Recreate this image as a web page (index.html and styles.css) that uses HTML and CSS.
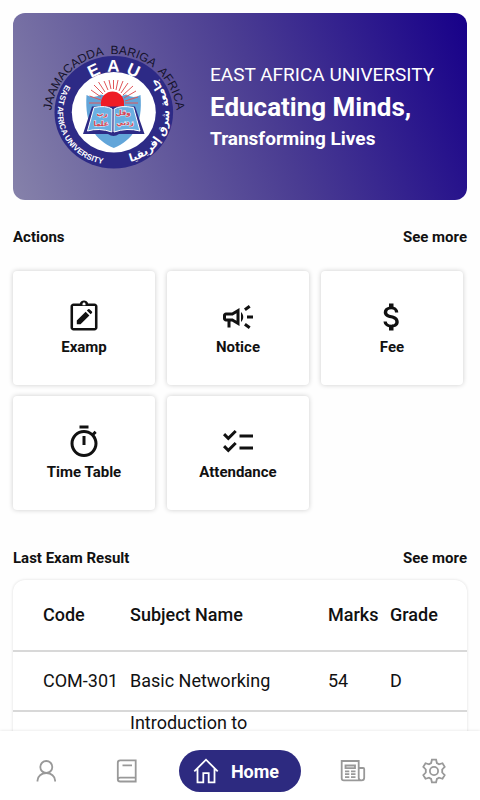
FILE: index.html
```html
<!DOCTYPE html>
<html lang="en">
<head>
<meta charset="utf-8">
<meta name="viewport" content="width=device-width, initial-scale=1">
<title>East Africa University</title>
<link rel="stylesheet" href="styles.css">
</head>
<body>
<main class="content">
  <section class="banner">
    <svg class="logo" viewBox="40 40 148 132" role="img" aria-label="EAU logo">
      <defs>
        <path id="arc-outer" d="M51 117 A63 64 0 0 1 177 117"/>
        <path id="arc-eau" d="M72.500 112 A41.300 41.300 0 0 1 155.100 112"/>
        <path id="arc-left" d="M66 83.500 A55 52.500 0 0 0 114 163.800"/>
        <path id="arc-right" d="M118 162.500 A52 51 0 0 0 150 72"/>
      </defs>
      <ellipse cx="113.800" cy="111.300" rx="59.300" ry="56.300" fill="#2d2a86"/>
      <ellipse cx="113.800" cy="111.300" rx="42" ry="40.300" fill="#fff"/>
      <path d="M86.500 94 Q94 98 101 93.500 Q114 99 126 93.500 Q133 98 140.500 94 C143 124 133 139 113.800 147 C95 139 84.500 124 86.500 94Z" fill="#62a5d9"/>
      <path d="M101 102L89 102M101 99L89.500 95M101 96L91 89M103 93L94 84M105 91L98.500 81M108 89L104 80M111 88L109 79M113.500 88V79M116 89L118 79M119 90L123 80M121 92L128 82M123 94L133 85M124 97L136 90M125 100L138 96M125 102L138 102" stroke="#e0565a"/>
      <path d="M101 107 V102 A11.500 11.500 0 0 1 124 102 V107Z" fill="#ee1c25"/>
      <path d="M92 105.500 L83 133 H108 Q113.500 137 119 133 H144.500 L135 105.500Z" fill="#2d2a86"/>
      <path d="M94 106.500 Q106 104 112 108 L111.800 131 Q99 126.500 87.500 130Z" fill="#6bb0e2" stroke="#fff"/>
      <path d="M114.200 108 Q120 104 133.500 106.500 L140 130 Q127 126.500 114 131Z" fill="#6bb0e2" stroke="#fff"/>
      <g class="book-text" direction="rtl">
        <text x="102" y="115">رب</text>
        <text x="101" y="125">علما</text>
        <text x="123" y="114">وقل</text>
        <text x="125" y="124">زدني</text>
      </g>
      <text class="arc-title"><textPath href="#arc-outer" startOffset="50%">JAAMACADDA<tspan dx="4"> BARIGA</tspan><tspan dx="4"> AFRICA</tspan></textPath></text>
      <text class="arc-eau"><textPath href="#arc-eau" startOffset="50%">E<tspan dx="6">A</tspan><tspan dx="6">U</tspan></textPath></text>
      <text class="arc-name"><textPath href="#arc-left">EAST AFRICA UNIVERSITY</textPath></text>
      <text class="arc-arabic"><textPath href="#arc-right" startOffset="52%">جامعة شرق إفريقيا</textPath></text>
    </svg>
    <div class="banner-text">
      <p class="banner-name">EAST AFRICA UNIVERSITY</p>
      <h1 class="banner-lead">Educating Minds,</h1>
      <p class="banner-sub">Transforming Lives</p>
    </div>
  </section>

  <section class="section">
    <header class="section-head">
      <h2>Actions</h2>
      <a href="#actions">See more</a>
    </header>
    <div class="cards" id="actions">
      <button class="card" type="button">
        <svg viewBox="0 0 24 24" aria-hidden="true"><path fill-rule="evenodd" d="M19 3h-4.180C14.400 1.840 13.300 1 12 1s-2.400.840-2.820 2H5c-1.100 0-2 .900-2 2v14c0 1.100.900 2 2 2h14c1.100 0 2-.900 2-2V5c0-1.100-.900-2-2-2zm-7-.600c.600 0 1 .400 1 1v.800h-2v-.800c0-.600.400-1 1-1zM19.300 19.300H4.700V4.700h14.600z"/><path d="M7.200 16.900v-2.500l5.900-5.900 2.500 2.500-5.900 5.900zM13.900 7.700l.900-.900q.500-.400.900 0l1.600 1.600q.400.400 0 .900l-.900.900z"/></svg>
        <span>Examp</span>
      </button>
      <button class="card" type="button">
        <svg viewBox="0 0 24 24" aria-hidden="true"><path d="M18 11v2h4v-2zM16 17.610c.960.710 2.210 1.650 3.200 2.390.400-.530.800-1.070 1.200-1.600-.990-.740-2.240-1.680-3.200-2.400-.400.540-.800 1.080-1.200 1.610zM20.400 5.600c-.400-.530-.800-1.070-1.200-1.600-.990.740-2.240 1.680-3.200 2.400.400.530.800 1.070 1.200 1.600.960-.720 2.210-1.650 3.200-2.400zM4 9c-1.100 0-2 .900-2 2v2c0 1.100.900 2 2 2h1v4h2v-4h1l5 3V6L8 9H4zm5.030 1.710L11 9.530v4.940l-1.970-1.180-.480-.290H4v-2h4.550l.480-.290zM15.500 12c0-1.330-.580-2.530-1.500-3.350v6.690c.920-.810 1.500-2.010 1.500-3.340z"/></svg>
        <span>Notice</span>
      </button>
      <button class="card" type="button">
        <svg viewBox="0 0 24 24" aria-hidden="true"><path d="M11.800 10.900c-2.270-.590-3-1.200-3-2.150 0-1.090 1.010-1.850 2.700-1.850 1.780 0 2.440.850 2.500 2.100h2.210c-.070-1.720-1.120-3.300-3.210-3.810V3h-3v2.160c-1.940.420-3.500 1.680-3.500 3.610 0 2.310 1.910 3.460 4.700 4.130 2.500.600 3 1.480 3 2.410 0 .690-.490 1.790-2.700 1.790-2.060 0-2.870-.920-2.980-2.100h-2.200c.120 2.190 1.760 3.420 3.680 3.830V21h3v-2.150c1.950-.370 3.500-1.500 3.500-3.550 0-2.840-2.430-3.810-4.700-4.400z"/></svg>
        <span>Fee</span>
      </button>
      <button class="card" type="button">
        <svg viewBox="0 0 24 24" aria-hidden="true"><path d="M15 1H9v2h6V1zm-4 13h2V8h-2v6zm8.030-6.610l1.420-1.420c-.430-.510-.900-.990-1.410-1.410l-1.420 1.420C16.070 4.740 14.120 4 12 4c-4.970 0-9 4.030-9 9s4.020 9 9 9 9-4.030 9-9c0-2.120-.740-4.070-1.970-5.610zM12 20c-3.870 0-7-3.130-7-7s3.130-7 7-7 7 3.130 7 7-3.130 7-7 7z"/></svg>
        <span>Time Table</span>
      </button>
      <button class="card" type="button">
        <svg viewBox="0 0 24 24" aria-hidden="true"><path d="M22 7h-9v2h9V7zm0 8h-9v2h9v-2zM5.540 11L2 7.460l1.410-1.410 2.120 2.120 4.240-4.240 1.410 1.410L5.540 11zm0 8L2 15.460l1.410-1.410 2.120 2.120 4.240-4.240 1.410 1.410L5.540 19z"/></svg>
        <span>Attendance</span>
      </button>
    </div>
  </section>

  <section class="section section-results">
    <header class="section-head">
      <h2>Last Exam Result</h2>
      <a href="#results">See more</a>
    </header>
    <div class="results" id="results">
      <table>
        <thead>
          <tr><th class="col-code" scope="col">Code</th><th scope="col">Subject Name</th><th class="col-marks" scope="col">Marks</th><th class="col-grade" scope="col">Grade</th></tr>
        </thead>
        <tbody>
          <tr><td class="col-code">COM-301</td><td>Basic Networking</td><td>54</td><td>D</td></tr>
          <tr class="tall"><td class="col-code"></td><td>Introduction to</td><td></td><td></td></tr>
        </tbody>
      </table>
    </div>
  </section>
</main>

<nav class="tabs" aria-label="Main">
  <a class="tab" href="#profile" aria-label="Profile">
    <svg viewBox="0 0 26 26" aria-hidden="true"><circle cx="13.300" cy="9" r="6"/><path d="M4.500 23.500v-1a8.800 7.500 0 0 1 17.600 0v1"/></svg>
  </a>
  <a class="tab" href="#courses" aria-label="Courses">
    <svg viewBox="0 0 26 26" aria-hidden="true"><path d="M21.700 2.300H6.200Q3.800 2.300 3.800 4.700V21.500Q3.800 23.500 6.200 23.500H21.700ZM4 21.500Q4 19.600 6.200 19.600H21.500M8.500 7.400H18"/></svg>
  </a>
  <a class="tab-home" href="#home" aria-current="page">
    <svg viewBox="0 0 26 26" aria-hidden="true"><path d="M1.300 13.400L13 1.700 24.700 13.400M4.500 10.800V24.300H10.300V15.200H15.700V24.300H21.500V10.800"/></svg>
    <span>Home</span>
  </a>
  <a class="tab" href="#news" aria-label="News">
    <svg viewBox="0 0 26 26" aria-hidden="true"><path d="M18.700 3H1.700V20.300Q1.700 22.400 3.800 22.400H21.500Q24.200 22.400 24.200 19.700V11Q24.200 10 23.200 10H18.700ZM18.700 10V19.700Q18.700 22.400 21.300 22.400"/><path d="M5.500 7.500H15v2.600H5.500ZM5 13.300H9.300M11 13.300H15.500M5 16.200H9.300M11 16.200H15.500M5 19.100H9.300M11 19.100H15.500"/></svg>
  </a>
  <a class="tab" href="#settings" aria-label="Settings">
    <svg viewBox="0 0 26 26" aria-hidden="true"><circle cx="13" cy="13" r="4.100"/><path d="M10.900 1.700H15.100L15.900 5.100L18 6.300L21.500 5.200L23.700 8.900L21.200 11.500V14.500L23.700 17.100L21.500 20.800L18 19.700L15.900 20.900L15.100 24.300H10.900L10.100 20.900L8 19.700L4.500 20.800L2.300 17.100L4.800 14.500V11.500L2.300 8.900L4.500 5.200L8 6.300L10.100 5.100Z"/></svg>
  </a>
</nav>
</body>
</html>
```
FILE: styles.css
```css
* {
  box-sizing: border-box;
}

body {
  margin: 0;
  height: 100vh;
  display: flex;
  flex-direction: column;
  background: #fefefe;
  color: #111;
  font-family: Roboto, "Liberation Sans", sans-serif;
  font-size: 15px;
}

h1, h2, p {
  margin: 0;
}

a {
  color: inherit;
  text-decoration: none;
}

.content {
  flex: 1;
  min-height: 0;
  padding: 13px 13px 0;
  overflow-y: auto;
  scrollbar-width: none;
}

.banner {
  display: flex;
  align-items: center;
  gap: 22px;
  min-height: 187px;
  padding: 0 0 0 27px;
  border-radius: 12px;
  background: linear-gradient(68deg, #8682aa 0%, #4a3c92 55%, #170089 100%);
  color: #fff;
}

.logo {
  flex: none;
  width: 148px;
  height: 132px;
  overflow: visible;
}

.logo text {
  font-family: "Liberation Sans", sans-serif;
}

.logo .arc-title {
  font-size: 12px;
  fill: #15132c;
  text-anchor: middle;
}

.logo .arc-eau {
  font-size: 17px;
  font-weight: 700;
  fill: #fff;
  text-anchor: middle;
}

.logo .arc-name {
  font-size: 8px;
  font-weight: 700;
  fill: #fff;
}

.logo .arc-arabic {
  font-family: "DejaVu Sans", sans-serif;
  font-size: 11px;
  font-weight: 700;
  fill: #fff;
  text-anchor: middle;
}

.logo .book-text text {
  font-family: "DejaVu Sans", sans-serif;
  font-size: 7px;
  font-weight: 700;
  fill: #d8434f;
  stroke: #dfe6f5;
  stroke-width: 1px;
  paint-order: stroke;
  text-anchor: middle;
}

.banner-text {
  line-height: 32px;
  white-space: nowrap;
}

.banner-name {
  font-size: 19px;
}

.banner-lead {
  font-size: 26px;
  font-weight: 700;
}

.banner-sub {
  font-size: 19px;
  font-weight: 700;
}

.section {
  padding-top: 27px;
}

.section-results {
  padding-top: 38px;
}

.section-head {
  display: flex;
  justify-content: space-between;
  line-height: 20px;
  font-weight: 700;
}

.section-head h2 {
  font-size: 15px;
}

.cards {
  display: grid;
  grid-template-columns: repeat(3, 1fr);
  gap: 11px 12px;
  padding: 24px 4px 0 0;
}

.card {
  display: flex;
  flex-direction: column;
  align-items: center;
  justify-content: center;
  min-height: 114px;
  padding: 2px 0 0;
  border: 0;
  border-radius: 4px;
  background: #fff;
  box-shadow: 0 0 5px rgba(0, 0, 0, 0.2);
  color: #111;
  font: inherit;
  font-weight: 700;
  line-height: 24px;
}

.card svg {
  width: 36px;
  height: 36px;
  fill: #111;
}

.results {
  margin-top: 12px;
  border-radius: 12px 12px 0 0;
  box-shadow: 0 0 3px rgba(0, 0, 0, 0.14);
  background: #fff;
}

table {
  width: 100%;
  table-layout: fixed;
  border-collapse: collapse;
  font-size: 18px;
  line-height: 24px;
}

th, td {
  height: 60px;
  padding: 0;
  border-top: 2px solid #d8d8d8;
  text-align: left;
  white-space: nowrap;
}

th {
  height: 71px;
  border-top: 0;
  font-weight: 500;
}

.tall td {
  line-height: 22px;
  vertical-align: top;
}

.col-code {
  width: 117px;
  padding-left: 30px;
}

.col-marks {
  width: 62px;
}

.col-grade {
  width: 77px;
}

.tabs {
  position: relative;
  display: grid;
  grid-template-columns: 1fr 1fr auto 1fr 1fr;
  align-items: center;
  align-content: start;
  justify-items: center;
  min-height: 69px;
  padding: 19px 6px 0;
  background: #fff;
  box-shadow: 0 0 3px rgba(0, 0, 0, 0.12);
}

.tabs svg {
  display: block;
  width: 26px;
  height: 26px;
  fill: none;
  stroke: #999;
  stroke-width: 1.8;
}

.tab-home {
  display: flex;
  align-items: center;
  justify-content: center;
  gap: 12px;
  height: 42px;
  margin: 0 12px;
  padding: 0 22px 0 14px;
  border-radius: 21px;
  background: #2d2a80;
  color: #fff;
  font-size: 18px;
  font-weight: 700;
}

.tabs .tab-home svg {
  stroke: #fff;
}
```
